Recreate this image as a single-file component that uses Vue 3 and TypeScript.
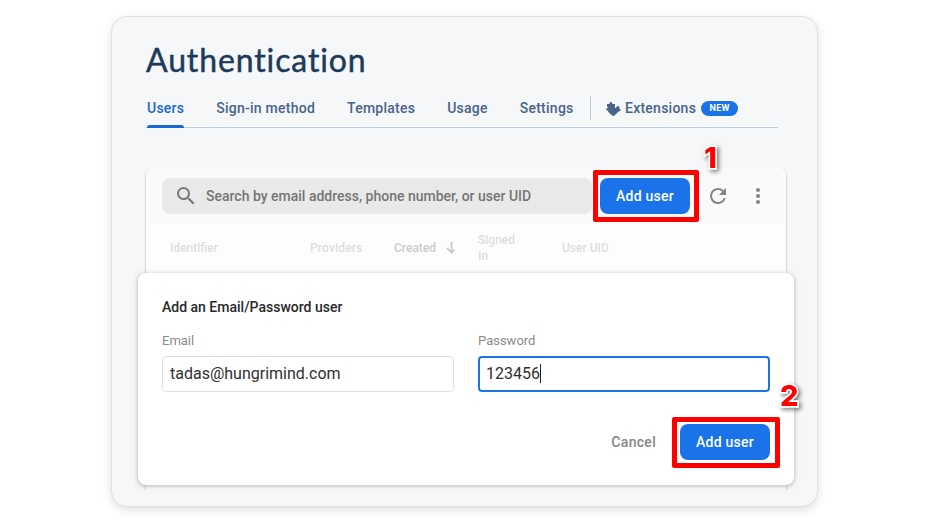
<script setup lang="ts">
const tabs: string[] = ['Users', 'Sign-in method', 'Templates', 'Usage', 'Settings']
const email = 'tadas@hungrimind.com'
const password = '123456'
</script>

<template>
  <main class="stage">
    <section class="frame">
      <h1>Authentication</h1>
      <nav class="tabs">
        <a v-for="(tab, i) in tabs" :key="tab" class="tab" :class="{ active: i === 0 }">{{ tab }}</a>
        <span class="divider"></span>
        <a class="tab extensions">
          <svg width="15" height="14" viewBox="0 0 15 14" fill="#48648a">
            <path d="M1 2.100H3.500C3.300.8 4.100 0 5 .1S6.400 1 6.200 2.100H9V4.500C8.700 5.400 9.200 6 9.700 5.900L12 3.600 14 5.900 12.900 7.100C14.500 6.600 15.200 8.200 14 9L12.600 9.600 8.500 13.600C7.700 14.100 6.800 14.100 6 13.600L1.900 9.500 2.800 8.500C1.400 9.100 0 8.300.3 7.200S1.400 5.800 2.500 6.100L1 4.600Z" />
          </svg>
          <span class="ext-label">Extensions</span>
          <span class="badge">NEW</span>
        </a>
      </nav>
      <div class="card">
        <div class="toolbar">
          <div class="search">
            <svg width="24" height="24" viewBox="0 0 24 24" fill="#777">
              <path d="M15.500 14h-.79l-.28-.27A6.471 6.471 0 0 0 16 9.500 6.500 6.500 0 1 0 9.500 16c1.610 0 3.090-.59 4.230-1.570l.27.28v.79l5 4.990L20.490 19l-4.990-5zm-6 0C7.010 14 5 11.990 5 9.500S7.010 5 9.500 5 14 7.010 14 9.500 11.990 14 9.500 14z" />
            </svg>
            <span>Search by email address, phone number, or user UID</span>
          </div>
          <button class="primary">Add user</button>
          <svg class="refresh" width="24" height="24" viewBox="0 0 24 24" fill="#858585">
            <path d="M17.650 6.350A7.958 7.958 0 0 0 12 4a8 8 0 1 0 7.730 10h-2.080A5.990 5.990 0 0 1 12 18a6 6 0 1 1 0-12c1.660 0 3.140.69 4.220 1.780L13 11h7V4l-2.350 2.350z" />
          </svg>
          <svg class="more" width="24" height="24" viewBox="0 0 24 24" fill="#858585">
            <circle cx="12" cy="6" r="2.100" /><circle cx="12" cy="12" r="2.100" /><circle cx="12" cy="18" r="2.100" />
          </svg>
        </div>
        <div class="columns">
          <span>Identifier</span>
          <span class="providers">Providers</span>
          <span class="sorted">Created
            <svg width="10" height="12" viewBox="0 0 10 12" fill="none" stroke="#c9c9c9" stroke-width="1.800"><path d="M5.500 0V10.500M1 6.200 5.500 10.500 8.300 7.800" /></svg>
          </span>
          <span class="signed">Signed<br />In</span>
          <span class="uid">User UID</span>
        </div>
      </div>
    </section>

    <section class="dialog">
      <h2>Add an Email/Password user</h2>
      <div class="fields">
        <div class="field">
          <span class="label">Email</span>
          <div class="input"><span class="email">{{ email }}</span></div>
        </div>
        <div class="field">
          <span class="label password">Password</span>
          <div class="input focused"><span>{{ password }}</span><i class="caret"></i></div>
        </div>
      </div>
      <div class="actions">
        <span class="cancel">Cancel</span>
        <button class="primary">Add user</button>
      </div>
    </section>

    <div class="mark mark-one"></div>
    <div class="mark mark-two"></div>
    <b class="num num-one">1</b>
    <b class="num num-two">2</b>
  </main>
</template>

<style>
body {
  margin: 0;
  background: #fff;
}
</style>

<style scoped>
* {
  box-sizing: border-box;
}
.stage {
  position: relative;
  width: 928px;
  height: 522px;
  padding: 16px 111px;
  overflow: hidden;
  font-family: Roboto, sans-serif;
}
.frame {
  width: 707px;
  height: 491px;
  padding: 0 34px;
  border: 1px solid #dfe1e4;
  border-radius: 16px;
  background: #f5f7f9;
  box-shadow: 0 3px 10px rgba(0, 0, 0, 0.13);
}
h1 {
  margin: 0;
  padding-top: 23px;
  height: 72px;
  font: 400 32px/40px Lato, sans-serif;
  letter-spacing: 0.88px;
  color: #1c3a5b;
  -webkit-text-stroke: 0.45px #1c3a5b;
  white-space: nowrap;
}
.tabs {
  display: flex;
  gap: 32px;
  width: 632px;
  height: 39px;
  padding-left: 1px;
  border-bottom: 1px solid #bccbdf;
}
.tab {
  position: relative;
  height: 39px;
  font-size: 14px;
  line-height: 39px;
  font-weight: 500;
  letter-spacing: 0.245px;
  color: #48648a;
  white-space: nowrap;
}
.active {
  color: #1967d2;
}
.active::after {
  content: '';
  position: absolute;
  left: 0;
  right: 0;
  bottom: 0;
  height: 3px;
  border-radius: 3px 3px 0 0;
  background: #1967d2;
}
.divider {
  width: 1px;
  height: 24px;
  margin: 7px -16px 0;
  background: #bccbdf;
}
.extensions {
  display: flex;
  align-items: center;
  margin-left: -1px;
}
.ext-label {
  margin-left: 4.5px;
}
.badge {
  width: 37px;
  height: 15px;
  margin-left: 5px;
  border-radius: 8px;
  background: #1a73e8;
  color: #fff;
  font-size: 9px;
  line-height: 15px;
  font-weight: 700;
  letter-spacing: 0.3px;
  text-align: center;
}
.card {
  width: 640px;
  height: 322px;
  margin-top: 40px;
  border-radius: 8px 8px 0 0;
  background: #fdfdfd;
  box-shadow: 0 1px 2px rgba(0, 0, 0, 0.4);
  clip-path: inset(0 -3px 0 -3px);
}
.toolbar {
  display: flex;
  align-items: center;
  height: 56px;
  padding: 0 16px;
  border-radius: 8px 8px 0 0;
  background: #fafafa;
}
.search {
  display: flex;
  align-items: center;
  width: 430px;
  height: 36px;
  padding-left: 12px;
  border-radius: 8px;
  background: #e9e9e9;
  color: #757575;
  font-size: 14px;
  font-weight: 500;
  white-space: nowrap;
}
.search span {
  margin-left: 8px;
}
.primary {
  width: 90px;
  height: 36px;
  margin: 0;
  padding: 0;
  border: 0;
  border-radius: 8px;
  background: #1a73e8;
  color: #fff;
  font: 500 14px/36px Roboto, sans-serif;
  letter-spacing: 0.25px;
}
.toolbar .primary {
  margin-left: 8px;
}
.refresh,
.more {
  margin-left: 16px;
}
.columns {
  display: flex;
  align-items: center;
  height: 48px;
  padding-left: 24px;
  font-size: 12px;
  line-height: 16px;
  font-weight: 500;
  letter-spacing: 0;
  color: #dedede;
}
.columns span {
  width: 140px;
  white-space: nowrap;
}
.columns .providers {
  width: 84px;
  letter-spacing: 0.15px;
}
.columns .sorted {
  display: flex;
  align-items: center;
  gap: 10px;
  width: 84px;
  color: #cbcbcb;
}
.columns .signed {
  width: 84px;
}
.dialog {
  position: absolute;
  left: 138px;
  top: 273px;
  width: 656px;
  height: 212px;
  padding: 24px;
  border-radius: 8px;
  background: #fff;
  box-shadow: 0 1px 4px rgba(0, 0, 0, 0.26), 0 1px 10px rgba(0, 0, 0, 0.06);
}
h2 {
  margin: 0;
  font-size: 14px;
  line-height: 20px;
  font-weight: 500;
  color: #292929;
}
.fields {
  display: flex;
  gap: 24px;
  margin-top: 15px;
}
.field {
  width: 292px;
}
.label {
  display: block;
  height: 24px;
  font-size: 13px;
  line-height: 18px;
  color: #8b8b8b;
}
.input {
  display: flex;
  align-items: center;
  height: 36px;
  padding: 0 7px 1px;
  border: 1px solid #e0e0e0;
  border-radius: 4px;
  color: #303030;
  font-size: 16px;
}
.focused {
  padding: 0 6px 1px;
  border: 2px solid #1a73e8;
}
.caret {
  width: 1px;
  height: 19px;
  background: #222;
}
.actions {
  display: flex;
  justify-content: flex-end;
  align-items: center;
  gap: 24px;
  margin-top: 32px;
}
.cancel {
  color: #858585;
  font-size: 14px;
  font-weight: 500;
  letter-spacing: 0.3px;
}
.mark {
  position: absolute;
  border: 5px solid #f00;
  border-radius: 2px;
}
.mark-one {
  left: 593px;
  top: 170px;
  width: 106px;
  height: 52px;
}
.mark-two {
  left: 672px;
  top: 417px;
  width: 108px;
  height: 51px;
}
.num {
  position: absolute;
  color: #f00;
  font: 800 29px/30px Inter, sans-serif;
  -webkit-text-stroke: 3.5px #fff;
  paint-order: stroke fill;
  filter: drop-shadow(2px 2px 2px rgba(0, 0, 0, 0.5));
}
.num-one {
  left: 704px;
  top: 143px;
}
.num-two {
  left: 780px;
  top: 381px;
}
</style>
